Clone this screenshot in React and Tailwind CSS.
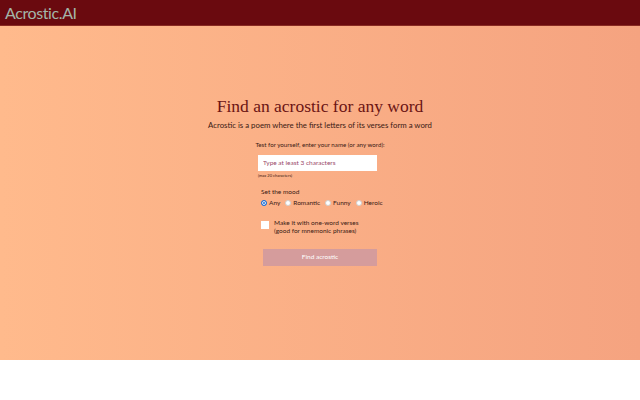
import React, { useState } from 'react';

const moods = ['Any', 'Romantic', 'Funny', 'Heroic'];

const App = () => {
  const [mood, setMood] = useState('Any');
  const [word, setWord] = useState('');

  return (
    <div className="w-[640px] h-[400px] bg-white" style={{ fontFamily: 'Lato, "Open Sans", sans-serif' }}>
      <header className="h-[26px] bg-[#6a0a0f] border-b border-[#8a2a22] flex items-center px-[5px]">
        <span className="text-[16px] leading-none text-[#a3b5a9] tracking-tight">Acrostic.AI</span>
      </header>

      <main className="h-[334px] bg-gradient-to-r from-[#ffba8c] to-[#f5a380] flex flex-col items-center pt-[72px]">
        <h1 className="text-[17.5px] leading-none text-[#6b1414]" style={{ fontFamily: '"Liberation Serif", serif' }}>
          Find an acrostic for any word
        </h1>
        <p className="mt-[6px] text-[7.8px] leading-none text-[#3a1a14]">
          Acrostic is a poem where the first letters of its verses form a word
        </p>

        <div className="mt-[13px] w-[124px] flex flex-col items-center">
          <label className="text-[6.2px] leading-none text-[#3a1a14] whitespace-nowrap">
            Test for yourself, enter your name (or any word):
          </label>
          <input
            value={word}
            onChange={e => setWord(e.target.value)}
            placeholder="Type at least 3 characters"
            className="self-start mt-[6px] w-[119px] h-[16px] bg-white px-[5px] text-[6.5px] text-[#5a1a20] placeholder:text-[#9a4a6a] outline-none"
          />
          <span className="self-start mt-[3px] text-[4px] leading-none text-[#3a1a14]">(max 20 characters)</span>
        </div>

        <div className="mt-[11px] w-[120px] ml-[2px] flex flex-col">
          <span className="text-[6.5px] leading-none text-[#3a1a14]">Set the mood</span>
          <div className="mt-[5px] flex items-center gap-[5px]">
            {moods.map(m => (
              <label key={m} className="flex items-center gap-[2px] text-[6.5px] leading-none text-[#3a1a14]">
                <span
                  onClick={() => setMood(m)}
                  className={mood === m
                    ? 'w-[6px] h-[6px] rounded-full border-[1.5px] border-[#1a6fd6] shadow-[inset_0_0_0_1px_white] bg-[#1a6fd6]'
                    : 'w-[6px] h-[6px] rounded-full bg-white border border-[#d0d0d0]'}
                />
                {m}
              </label>
            ))}
          </div>

          <div className="mt-[12px] flex items-start gap-[5px]">
            <span className="w-[8px] h-[8px] mt-[2px] bg-white" />
            <span className="text-[6.5px] leading-[8px] text-[#3a1a14]">
              Make it with one-word verses<br />(good for mnemonic phrases)
            </span>
          </div>
        </div>

        <button className="mt-[14px] w-[114px] h-[17px] bg-[#d59c9c] text-white text-[6.5px]">
          Find acrostic
        </button>
      </main>
    </div>
  );
};

export default App;
